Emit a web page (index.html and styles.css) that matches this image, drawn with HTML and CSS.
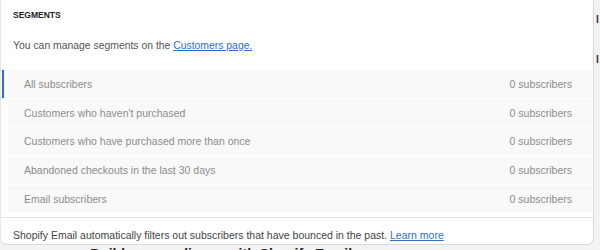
FILE: index.html
```html
<!DOCTYPE html>
<html>
<head>
<meta charset="utf-8">
<link rel="stylesheet" href="styles.css">
</head>
<body>
<div class="page">
  <div class="top">
    <div class="card">
      <div class="header">SEGMENTS</div>
      <p class="intro">You can manage segments on the <a href="#" class="link">Customers page.</a></p>
      <div class="list">
        <div class="row active"><span class="name">All subscribers</span><span class="count">0 subscribers</span></div>
        <div class="row"><span class="name">Customers who haven't purchased</span><span class="count">0 subscribers</span></div>
        <div class="row"><span class="name">Customers who have purchased more than once</span><span class="count">0 subscribers</span></div>
        <div class="row"><span class="name">Abandoned checkouts in the last 30 days</span><span class="count">0 subscribers</span></div>
        <div class="row"><span class="name">Email subscribers</span><span class="count">0 subscribers</span></div>
      </div>
      <div class="footer">Shopify Email automatically filters out subscribers that have bounced in the past. <a href="#" class="link">Learn more</a></div>
    </div>
    <div class="side">
      <div class="side-line s1">I</div>
      <div class="side-line s2">I</div>
    </div>
  </div>
  <div class="behind-clip"><div class="behind">Build your audience with Shopify Email</div></div>
</div>
</body>
</html>
```
FILE: styles.css
```css
html, body {
  margin: 0;
  padding: 0;
}
body {
  background: #f3f3f3;
  font-family: "Liberation Sans", Arial, sans-serif;
  width: 600px;
  height: 250px;
  overflow: hidden;
}
.page {
  display: flex;
  flex-direction: column;
}
.top {
  display: flex;
}
.card {
  width: 592px;
  height: 244px;
  background: #fff;
  border-right: 1px solid #d9d9d9;
  border-bottom: 1px solid #d9d9d9;
  border-left: 1px solid #e6e6e6;
  border-radius: 0 0 7px 7px;
  box-sizing: content-box;
  display: flex;
  flex-direction: column;
}
.header {
  font-size: 8.5px;
  font-weight: 700;
  color: #222;
  padding: 10px 0 0 12px;
  height: 10px;
  line-height: 10px;
}
.intro {
  margin: 0;
  padding: 0 0 0 12px;
  margin-top: 19px;
  font-size: 10.4px;
  line-height: 14px;
  color: #555;
}
.link {
  color: #2c6ecb;
  text-decoration: underline;
}
.list {
  margin-top: 17px;
  display: flex;
  flex-direction: column;
  gap: 1px;
  padding-left: 7px;
  padding-right: 1px;
}
.row {
  display: flex;
  justify-content: space-between;
  align-items: center;
  height: 27.7px;
  background: #f9f9f9;
  padding: 0 20px 0 16px;
  font-size: 10.5px;
  color: #8c8c8c;
  position: relative;
}
.row.active::before {
  content: "";
  position: absolute;
  left: -6px;
  top: 0;
  bottom: 0;
  width: 2px;
  background: #2c6ecb;
}
.footer {
  margin-top: 5px;
  border-top: 1px solid #e3e3e3;
  padding: 10px 0 0 12px;
  font-size: 10.5px;
  line-height: 14px;
  color: #444;
}
.side {
  flex: 1;
  overflow: hidden;
  display: flex;
  flex-direction: column;
}
.side-line {
  font-size: 10px;
  font-weight: 700;
  color: #333;
  padding-left: 2px;
  line-height: 10px;
}
.s1 { margin-top: 15px; }
.s2 { margin-top: 30px; }
.behind-clip {
  height: 5px;
  overflow: hidden;
}
.behind {
  font-size: 14px;
  font-weight: 700;
  color: #222;
  padding-left: 90px;
  line-height: 14px;
  margin-top: 2px;
}
```
